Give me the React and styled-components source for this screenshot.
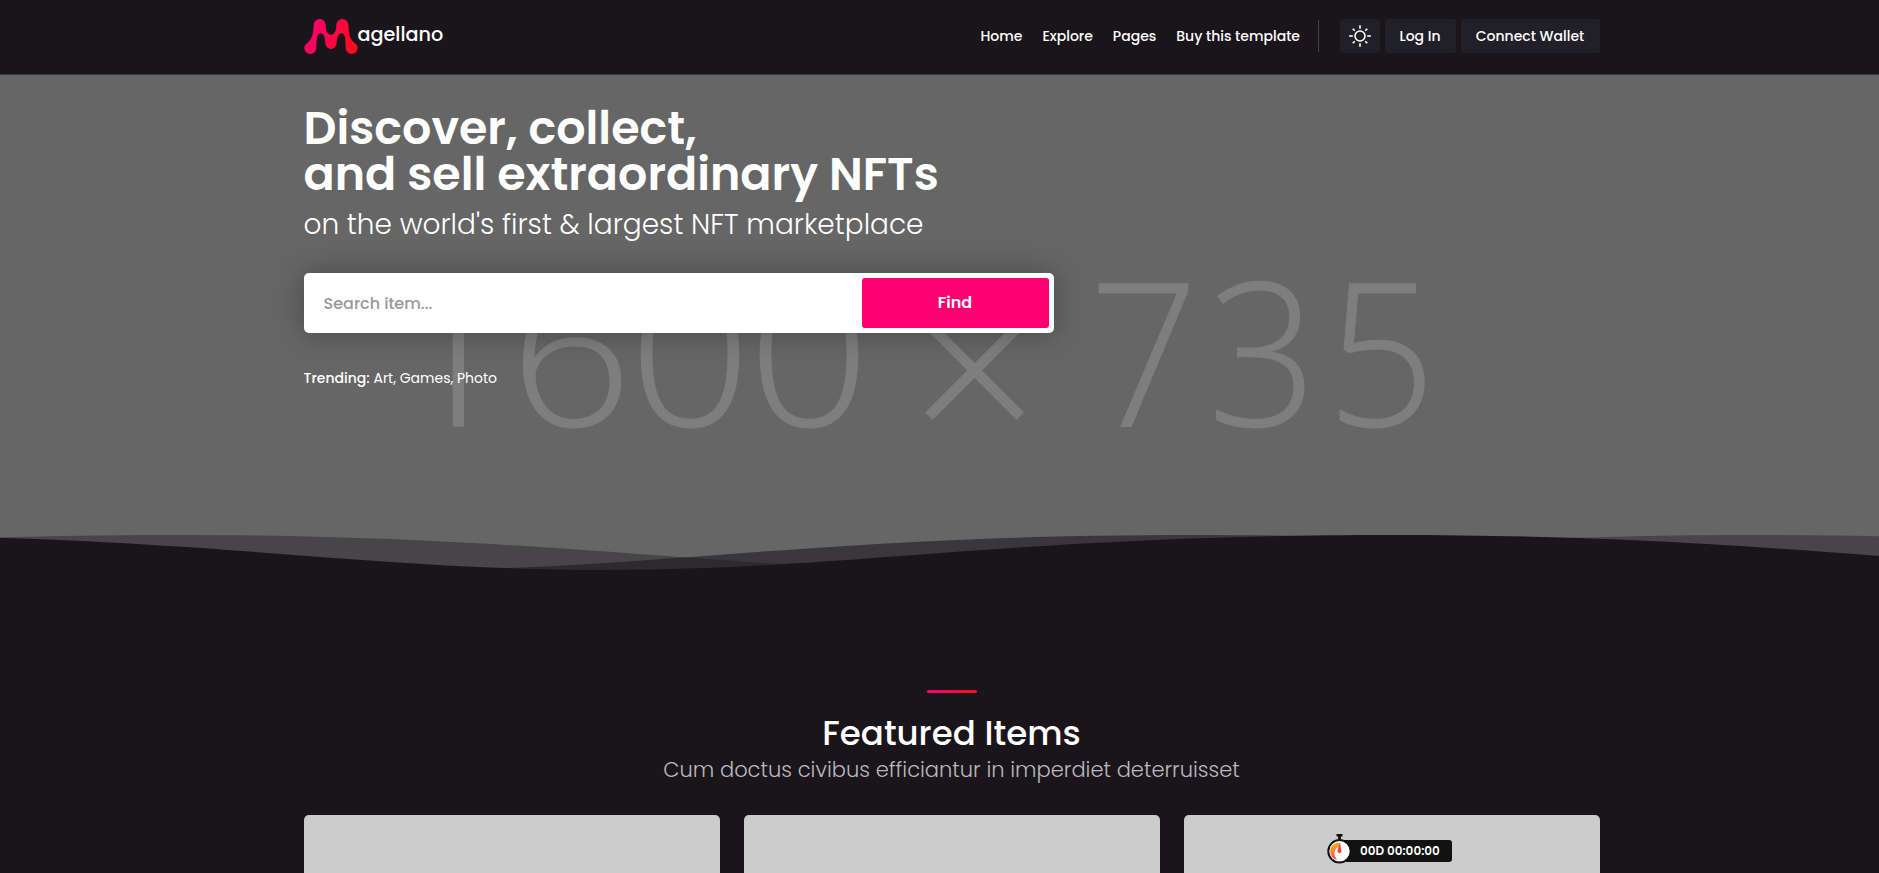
import React from 'react';
import styled, { createGlobalStyle } from 'styled-components';

const GlobalStyle = createGlobalStyle`
  *, *::before, *::after { box-sizing: border-box; }
  html, body { margin: 0; padding: 0; overflow: hidden; background: #1a151b; }
  body { font-family: Poppins, Inter, sans-serif; color: #fff; }
  h1, h2, p { margin: 0; }
  a { color: inherit; text-decoration: none; }
`;

const Page = styled.div`
  width: calc(100% + 24px);
  height: 873px;
  overflow: hidden;
  background: #1a151b;
`;

const Container = styled.div`
  width: 1320px;
  margin: 0 auto;
  padding: 0 12px;
`;

const Header = styled.header`
  height: 75px;
  border-bottom: 1px solid #3b3842;
`;

const HeaderRow = styled(Container)`
  display: flex;
  align-items: flex-start;
  justify-content: space-between;
  padding-top: 19px;
`;

const Brand = styled.a`
  display: flex;
  align-items: flex-start;
  svg { display: block; width: 54px; height: 35px; }
`;

const BrandName = styled.span`
  font-size: 19.2px;
  font-weight: 500;
  line-height: 32px;
`;

const Nav = styled.nav`
  display: flex;
  align-items: center;
  height: 34px;
  font-size: 14px;
  font-weight: 500;
`;

const NavLink = styled.a`
  margin-right: ${(p) => (p.$last ? 18 : 20)}px;
  white-space: nowrap;
`;

const Separator = styled.span`
  width: 1px;
  height: 32px;
  margin-right: 20.5px;
  background: #47434b;
`;

const HeaderButton = styled.button`
  display: flex;
  align-items: center;
  justify-content: center;
  width: ${(p) => p.$width}px;
  height: 34px;
  margin-left: ${(p) => (p.$first ? 0 : 5)}px;
  padding: 0;
  border: 0;
  border-radius: 3px;
  background: #212027;
  color: #fff;
  font: inherit;
  white-space: nowrap;
`;

const Hero = styled.section`
  position: relative;
  height: 497px;
  background: #666;
`;

const Backdrop = styled.svg`
  position: absolute;
  inset: 0;
  width: 1903px;
  height: 497px;
  text {
    font-family: "Open Sans", sans-serif;
    font-size: 200px;
    font-weight: 300;
    fill: #7e7e7e;
    stroke: #7e7e7e;
    stroke-width: 1px;
  }
  .width { letter-spacing: -3px; }
  .height { letter-spacing: 9.5px; }
  .times { font-size: 225px; }
`;

const HeroContent = styled(Container)`
  position: relative;
  padding-top: 30px;
`;

const HeroTitle = styled.h1`
  font-size: 46px;
  font-weight: 600;
  line-height: 46px;
`;

const HeroText = styled.p`
  margin-top: 11px;
  font-size: 28px;
  font-weight: 300;
  line-height: 34px;
`;

const SearchBar = styled.form`
  display: flex;
  width: 750px;
  height: 60px;
  margin-top: 31px;
  padding: 5px;
  border-radius: 5px;
  background: #fff;
  box-shadow: 0 0 30px rgba(0, 0, 0, 0.3);
`;

const SearchInput = styled.input`
  flex: 1;
  min-width: 0;
  padding: 0 15px;
  border: 0;
  outline: 0;
  background: transparent;
  font-family: inherit;
  font-size: 16px;
  font-weight: 500;
  &::placeholder { color: #999; opacity: 1; }
`;

const FindButton = styled.button`
  width: 187px;
  border: 0;
  padding: 0 0 1px;
  border-radius: 3px;
  background: #ff0072;
  color: #fff;
  font-family: inherit;
  font-size: 16px;
  font-weight: 600;
`;

const Trending = styled.p`
  margin-top: 35px;
  font-size: 14px;
  line-height: 20px;
  strong { font-weight: 500; }
`;

const Waves = styled.svg`
  position: absolute;
  left: 0;
  bottom: 0;
  width: 1903px;
  height: 37px;
  display: block;
`;

const Featured = styled(Container)`
  display: flex;
  flex-direction: column;
  align-items: center;
  padding-top: 118px;
`;

const Accent = styled.span`
  width: 50px;
  height: 3px;
  border-radius: 2px;
  background: linear-gradient(90deg, #ff0072, #ff0a1c);
`;

const SectionTitle = styled.h2`
  margin-top: 20px;
  font-size: 34px;
  font-weight: 500;
  line-height: 40px;
`;

const SectionText = styled.p`
  margin-top: 4px;
  font-size: 21px;
  font-weight: 300;
  line-height: 26px;
  color: #bab9bb;
`;

const Cards = styled.div`
  display: grid;
  grid-template-columns: repeat(3, 1fr);
  gap: 24px;
  align-self: stretch;
  margin-top: 32px;
`;

const Card = styled.article`
  display: flex;
  justify-content: center;
  align-items: flex-start;
  height: 300px;
  padding-top: 19px;
  padding-right: 4px;
  border-radius: 5px;
  background: #ccc;
`;

const Countdown = styled.div`
  display: flex;
  align-items: flex-start;
  svg { position: relative; display: block; width: 25px; height: 30px; }
`;

const Timer = styled.span`
  width: 112px;
  height: 22px;
  margin: 6px 0 0 -12px;
  padding-left: 20px;
  border-radius: 3px;
  background: #121212;
  font-size: 12px;
  font-weight: 600;
  line-height: 22px;
  white-space: nowrap;
`;

const LogoMark = () => (
  <svg viewBox="0 0 160 105">
    <defs>
      <linearGradient id="brand" x1="0" x2="1" y1="0.3" y2="0.6">
        <stop offset="0" stopColor="#ff0072" />
        <stop offset="1" stopColor="#ff0a1c" />
      </linearGradient>
    </defs>
    <path
      fill="url(#brand)"
      d="M0 87C0 74 12 72 18 62C27 48 27 30 28 18A18 18 0 0 1 64 18C64 34 68 47 80 47C92 47 96 34 96 18A18 18 0 0 1 132 18C133 30 133 48 142 62C148 72 160 74 160 87A18 18 0 0 1 124 87C124 60 122 43 112 43C102 43 98 55 97 72A17 18 0 0 1 63 72C62 55 58 43 49 43C38 43 36 60 36 87A18 18 0 0 1 0 87Z"
    />
  </svg>
);

const rays = [0, 45, 90, 135, 180, 225, 270, 315];

const SunIcon = () => (
  <svg width="22" height="22" viewBox="0 0 22 22" fill="none" stroke="#fff" strokeWidth="1.6">
    <circle cx="11" cy="11" r="5" />
    {rays.map((a) => (
      <path key={a} d={a % 90 ? 'M11 3.6V0.7' : 'M11 3.8V0.2'} transform={`rotate(${a} 11 11)`} />
    ))}
  </svg>
);

const StopwatchIcon = () => (
  <svg viewBox="0 0 25 30">
    <defs>
      <linearGradient id="dial" x1="0" x2="0" y1="0" y2="1">
        <stop offset="0" stopColor="#ffb000" />
        <stop offset="0.5" stopColor="#ff8030" />
        <stop offset="1" stopColor="#f23a50" />
      </linearGradient>
    </defs>
    <path d="M9.5 0h6v2.5h-1.6V5h-2.8V2.5H9.5z" fill="#121212" />
    <circle cx="12.5" cy="17.3" r="11.2" fill="#fff" stroke="#121212" strokeWidth="2" />
    <path d="M11.6 8.5A8.8 8.8 0 0 0 10.8 26A8 8 0 0 1 11.6 12.4z" fill="url(#dial)" />
    <path d="M12 9h1l1.2 6.8a2.1 2.1 0 1 1-3.4 0z" fill="#f04552" />
  </svg>
);

const EDGE = 90;

const crest = (start, half, count) => {
  let d = `M${start} 35`;
  for (let i = 0; i < count; i += 1) {
    const x = start + i * 2 * half;
    d += `C${x + 380} 35 ${x + half - 247} 70 ${x + half} 70S${x + 2 * half - 380} 35 ${x + 2 * half} 35`;
  }
  return `${d}V${EDGE}H${start}Z`;
};

const WaveDivider = () => (
  <Waves viewBox="0 35 1903 37" preserveAspectRatio="none">
    <path d={crest(-1414, 793, 3)} fill="#1a151b" fillOpacity="0.4" />
    <path d={crest(-379, 786, 2)} fill="#1a171f" fillOpacity="0.6" />
    <path d={crest(-181, 786, 2)} fill="#1a151b" />
  </Waves>
);

export default function App() {
  return (
    <>
      <GlobalStyle />
      <Page>
        <Header>
          <HeaderRow>
            <Brand href="#">
              <LogoMark />
              <BrandName>agellano</BrandName>
            </Brand>
            <Nav>
              <NavLink href="#">Home</NavLink>
              <NavLink href="#">Explore</NavLink>
              <NavLink href="#">Pages</NavLink>
              <NavLink href="#" $last>Buy this template</NavLink>
              <Separator />
              <HeaderButton $width={40} $first><SunIcon /></HeaderButton>
              <HeaderButton $width={71}>Log In</HeaderButton>
              <HeaderButton $width={139}>Connect Wallet</HeaderButton>
            </Nav>
          </HeaderRow>
        </Header>

        <Hero>
          <Backdrop>
            <text className="width" transform="translate(390 351.3) scale(1.07 1)" dx="2 -1">1600</text>
            <text className="times" x="974.7" y="375" textAnchor="middle">×</text>
            <text className="height" transform="translate(1089 351.3) scale(0.96 1)">735</text>
          </Backdrop>
          <WaveDivider />
          <HeroContent>
            <HeroTitle>
              Discover, collect,
              <br />
              and sell extraordinary NFTs
            </HeroTitle>
            <HeroText>on the world's first &amp; largest NFT marketplace</HeroText>
            <SearchBar>
              <SearchInput placeholder="Search item..." />
              <FindButton type="button">Find</FindButton>
            </SearchBar>
            <Trending>
              <strong>Trending:</strong> Art, Games, Photo
            </Trending>
          </HeroContent>
        </Hero>

        <Featured>
          <Accent />
          <SectionTitle>Featured Items</SectionTitle>
          <SectionText>Cum doctus civibus efficiantur in imperdiet deterruisset</SectionText>
          <Cards>
            <Card />
            <Card />
            <Card>
              <Countdown>
                <StopwatchIcon />
                <Timer>00D 00:00:00</Timer>
              </Countdown>
            </Card>
          </Cards>
        </Featured>
      </Page>
    </>
  );
}
